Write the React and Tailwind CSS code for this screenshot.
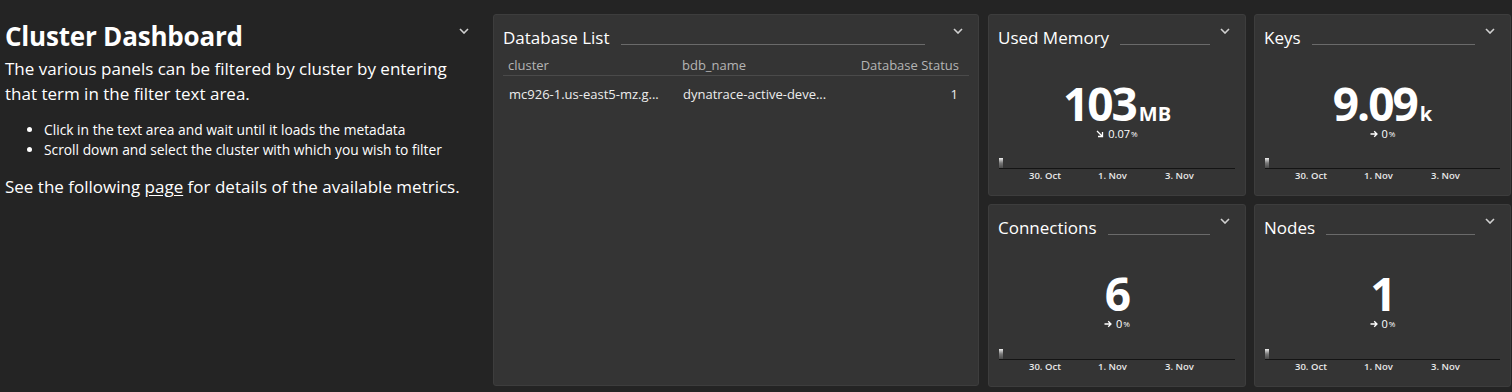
import React from 'react';

const Chevron = ({ className = '' }) => (
  <svg width="10" height="6" viewBox="0 0 10 6" className={className}>
    <path d="M1 1l4 4 4-4" fill="none" stroke="#d0d0d0" strokeWidth="1.6" />
  </svg>
);

const TrendArrow = ({ dir }) => (
  <svg width="8" height="8" viewBox="0 0 8 8" className="mr-[4px]">
    {dir === 'down' ? (
      <path d="M1 1l5.5 5.5M2 6.5h4.5V2" fill="none" stroke="#fff" strokeWidth="1.3" />
    ) : (
      <path d="M0.5 4h6.5M4.2 1.2L7 4 4.2 6.8" fill="none" stroke="#fff" strokeWidth="1.3" />
    )}
  </svg>
);

function TileHeader({ title, lineClass = 'mr-[10px]' }) {
  return (
    <div className="flex items-start h-[42px] pt-[12px] pl-[9px] pr-[15px]">
      <span className="text-[17px] leading-[22px] text-white whitespace-nowrap">{title}</span>
      <div className={`flex-1 ml-[11px] mt-[17px] h-px bg-[#6a6a6a] ${lineClass}`} />
      <Chevron className="mt-[1px] shrink-0" />
    </div>
  );
}

function Sparkline() {
  return (
    <div className="px-[10px] pb-[12px]">
      <div className="h-[10px] flex items-end">
        <div className="w-[4px] h-[10px] bg-gradient-to-b from-[#f0f0f0] via-[#777] to-[#4a4a4a]" />
      </div>
      <div className="h-px bg-[#141414]" />
      <div className="relative h-[14px] text-[9.5px] leading-[14px] font-semibold text-[#e8e8e8]">
        <span className="absolute left-[30px] top-0">30. Oct</span>
        <span className="absolute left-[99px] top-0">1. Nov</span>
        <span className="absolute left-[166px] top-0">3. Nov</span>
      </div>
    </div>
  );
}

function SingleValue({ title, value, unit, trend, dir = 'right' }) {
  return (
    <div className="flex-1 flex flex-col bg-[#343434] border border-[#3d3d3d] rounded-[3px] overflow-hidden">
      <TileHeader title={title} />
      <div className="flex-1 flex flex-col items-center pt-[23px]">
        <div className="flex items-baseline text-white font-bold">
          <span className="text-[46px] leading-[46px] tracking-[-2px]">{value}</span>
          {unit && <span className="text-[20px] leading-[20px] ml-[3px]">{unit}</span>}
        </div>
        <div className="mt-[1px] flex items-center text-[11px] leading-[14px] text-white">
          <TrendArrow dir={dir} />
          <span>{trend}</span>
          <span className="text-[8px] ml-[1px]">%</span>
        </div>
      </div>
      <Sparkline />
    </div>
  );
}

export default function App() {
  return (
    <div
      className="h-[392px] w-[1512px] bg-[#242424] flex pt-[14px] pb-[6px] overflow-hidden"
      style={{ fontFamily: '"Open Sans", "Noto Sans", sans-serif' }}
    >
      {/* markdown tile */}
      <div className="w-[485px] shrink-0 text-white pl-[5px] pr-[14px] relative">
        <Chevron className="absolute left-[459px] top-[14px]" />
        <h1 className="text-[26px] font-bold leading-[32px] mt-[6px] tracking-[-0.2px]">Cluster Dashboard</h1>
        <p className="text-[17px] leading-[25px] mt-[4px]">
          The various panels can be filtered by cluster by entering that term in the filter text area.
        </p>
        <ul className="list-disc pl-[39px] mt-[14px] text-[13.8px] leading-[20px]">
          <li>Click in the text area and wait until it loads the metadata</li>
          <li>Scroll down and select the cluster with which you wish to filter</li>
        </ul>
        <p className="text-[17px] leading-[25px] mt-[14px]">
          See the following <span className="underline underline-offset-2">page</span> for details of the available metrics.
        </p>
      </div>

      {/* Database list */}
      <div className="w-[486px] ml-[8px] shrink-0 bg-[#343434] border border-[#3d3d3d] rounded-[3px] flex flex-col">
        <TileHeader title="Database List" lineClass="mr-[28px]" />
        <div className="mx-[9px]">
          <div className="flex text-[13px] text-[#b4b4b4] h-[19px] items-center border-b border-[#4a4a4a] pl-[5px] pr-[10px]">
            <span className="w-[174px]">cluster</span>
            <span className="flex-1">bdb_name</span>
            <span>Database Status</span>
          </div>
          <div className="flex text-[13px] text-[#ececec] h-[38px] items-center pl-[6px] pr-[11px]">
            <span className="w-[174px]">mc926-1.us-east5-mz.g...</span>
            <span className="flex-1">dynatrace-active-deve...</span>
            <span>1</span>
          </div>
        </div>
      </div>

      {/* Single value tiles */}
      <div className="flex-1 ml-[9px] mr-[2px] grid grid-cols-[258px_257px] grid-rows-[182px_183px] gap-x-[8px] gap-y-[8px]">
        <SingleValue title="Used Memory" value="103" unit="MB" dir="down" trend="0.07" />
        <SingleValue title="Keys" value="9.09" unit="k" trend="0" />
        <SingleValue title="Connections" value="6" trend="0" />
        <SingleValue title="Nodes" value="1" trend="0" />
      </div>
    </div>
  );
}
